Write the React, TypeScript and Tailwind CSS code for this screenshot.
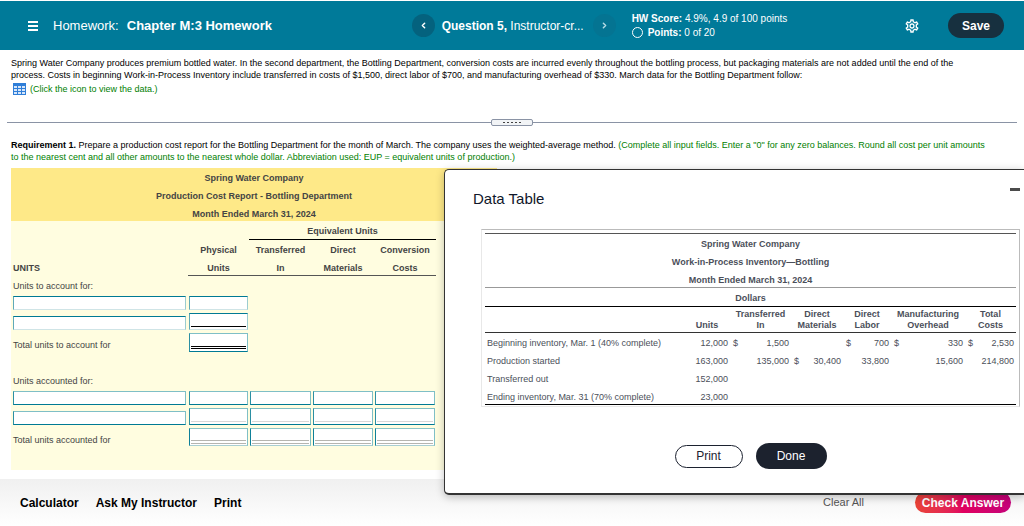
import React from 'react';
import { ChevronLeft, ChevronRight } from 'lucide-react';
import { MdOutlineSettings } from 'react-icons/md';

const inventoryRows = [
  {
    label: 'Beginning inventory, Mar. 1 (40% complete)',
    units: '12,000',
    costs: [['$', '1,500'], ['', ''], ['$', '700'], ['$', '330'], ['$', '2,530']],
  },
  {
    label: 'Production started',
    units: '163,000',
    costs: [['', '135,000'], ['$', '30,400'], ['', '33,800'], ['', '15,600'], ['', '214,800']],
  },
  {
    label: 'Transferred out',
    units: '152,000',
    costs: [['', ''], ['', ''], ['', ''], ['', ''], ['', '']],
  },
  {
    label: 'Ending inventory, Mar. 31 (70% complete)',
    units: '23,000',
    costs: [['', ''], ['', ''], ['', ''], ['', ''], ['', '']],
  },
];

const costHeadings = [
  ['Transferred', 'In'],
  ['Direct', 'Materials'],
  ['Direct', 'Labor'],
  ['Manufacturing', 'Overhead'],
  ['Total', 'Costs'],
];

const unitHeadings = [
  ['Physical', 'Units'],
  ['Transferred', 'In'],
  ['Direct', 'Materials'],
  ['Conversion', 'Costs'],
];

const boxTop = 'border border-t-[#007a94] border-l-[#5fa9b8] border-r-[#9cccd0] border-b-[#cfe4e6] bg-white';
const boxBottom = 'border border-t-[#7fbfc6] border-l-[#2b8fa3] border-r-[#7fbfc6] border-b-[#007a94] bg-white';
const boxSides = 'border border-t-[#8cc6c9] border-l-[#0e8099] border-r-[#7fbfc6] border-b-[#a9cfd2] bg-white';

function Header() {
  return (
    <header className="mt-px h-[49px] flex items-center bg-[#007a99] text-white pr-5">
      <div className="w-[41%] flex items-center pl-7 text-[13px]">
        <button aria-label="Menu" className="flex flex-col gap-[2px] mr-[15px]">
          <span className="block w-[10px] h-[2px] bg-white" />
          <span className="block w-[10px] h-[2px] bg-white" />
          <span className="block w-[10px] h-[2px] bg-white" />
        </button>
        <span className="mr-2">Homework:</span>
        <h1 className="font-bold">Chapter M:3 Homework</h1>
      </div>
      <nav className="flex items-center text-xs">
        <button aria-label="Previous question" className="w-[23px] h-[23px] rounded-full bg-[#04627e] flex items-center justify-center">
          <ChevronLeft className="w-[9px] h-[9px]" strokeWidth={4} />
        </button>
        <span className="w-[158px] pl-[7px] whitespace-nowrap">
          <b>Question 5,</b> Instructor-cr...
        </span>
        <button aria-label="Next question" className="w-[23px] h-[23px] rounded-full bg-[#047492] flex items-center justify-center">
          <ChevronRight className="w-[9px] h-[9px] text-[#b5dbe4]" strokeWidth={4} />
        </button>
      </nav>
      <div className="flex-1 pl-4 text-[10px] leading-[14px] whitespace-nowrap">
        <p><b>HW Score:</b> 4.9%, 4.9 of 100 points</p>
        <p className="flex items-center">
          <span className="w-[11px] h-[11px] rounded-full border border-white mr-[5px]" />
          <span><b>Points:</b> 0 of 20</span>
        </p>
      </div>
      <button aria-label="Settings" className="mr-7">
        <MdOutlineSettings className="w-4 h-4" />
      </button>
      <button className="w-[56px] h-[25px] rounded-full bg-[#17303f] text-xs font-bold">Save</button>
    </header>
  );
}

function Intro() {
  return (
    <section className="pt-[7px] pl-[11px] pr-9 text-[9px] leading-3 text-black">
      <p>
        Spring Water Company produces premium bottled water. In the second department, the Bottling Department,
        conversion costs are incurred evenly throughout the bottling process, but packaging materials are not added
        until the end of the process. Costs in beginning Work-in-Process Inventory include transferred in costs of
        $1,500, direct labor of $700, and manufacturing overhead of $330. March data for the Bottling Department follow:
      </p>
      <a href="#data-table" className="flex items-center gap-1 pl-[2px] h-4 text-[#008000]">
        <svg width="13" height="12" viewBox="0 0 13 12">
          <rect width="13" height="12" fill="#2f7ed8" />
          <path
            d="M1 3h3v2H1zM5 3h3v2H5zM9 3h3v2H9zM1 6h3v2H1zM5 6h3v2H5zM9 6h3v2H9zM1 9h3v2H1zM5 9h3v2H5zM9 9h3v2H9z"
            fill="#d6e6fa"
          />
        </svg>
        (Click the icon to view the data.)
      </a>
    </section>
  );
}

function Splitter() {
  return (
    <div className="mt-[22px] mx-[7px] flex items-center">
      <span className="flex-1 h-px bg-[#8a93a5]" />
      <button
        aria-label="Resize panels"
        className="w-[42px] h-[7px] rounded-[2px] border border-[#8a93a5] bg-[#f2f4f6] flex items-center justify-center gap-[2px]"
      >
        <span className="w-[2px] h-px bg-[#444]" />
        <span className="w-[2px] h-px bg-[#444]" />
        <span className="w-[2px] h-px bg-[#444]" />
        <span className="w-[2px] h-px bg-[#444]" />
        <span className="w-[2px] h-px bg-[#444]" />
      </button>
      <span className="flex-1 h-px bg-[#8a93a5]" />
    </div>
  );
}

function LabelBox({ name, box }: { name: string; box: string }) {
  return (
    <td className="p-0 pl-[2px] pb-[2px] align-bottom">
      <input aria-label={name} className={`block w-[173px] h-[14px] px-1 ${box}`} />
    </td>
  );
}

function UnitBox({ name, box, size, line }: { name: string; box: string; size: string; line: string }) {
  return (
    <td className="p-0 px-px pb-[2px] align-bottom">
      <div className={`px-px ${size} ${box}`}>
        <input aria-label={name} className={`block w-full ${line}`} />
      </div>
    </td>
  );
}

function ReportTable() {
  return (
    <table className="mt-[5px] ml-[11px] w-[486px] table-fixed border-separate border-spacing-0 bg-[#fffde0] text-[9px] leading-[11px] text-[#444]">
      <colgroup>
        <col className="w-[177px]" />
        <col className="w-[61px]" />
        <col className="w-[63px]" />
        <col className="w-[62px]" />
        <col className="w-[62px]" />
        <col />
      </colgroup>
      <thead>
        <tr className="h-[53px] bg-[#fee988]">
          <th colSpan={6} className="p-0">
            <div className="grid gap-1 pt-[3px] leading-[14px]">
              <p>Spring Water Company</p>
              <p>Production Cost Report - Bottling Department</p>
              <p>Month Ended March 31, 2024</p>
            </div>
          </th>
        </tr>
        <tr className="h-[19px]">
          <td colSpan={2} />
          <th colSpan={3} className="p-0 pt-[3px] border-b border-black">Equivalent Units</th>
          <td />
        </tr>
        <tr className="h-[36px]">
          <th className="p-0 pl-[2px] pb-[2px] text-left align-bottom">UNITS</th>
          {unitHeadings.map(([first, second]) => (
            <th key={first} className="p-0 border-b border-[#555]">
              <div className="grid gap-1 pt-[3px] leading-[14px]">
                <p>{first}</p>
                <p>{second}</p>
              </div>
            </th>
          ))}
          <td />
        </tr>
      </thead>
      <tbody>
        <tr className="h-[18px]">
          <td className="p-0 pt-[3px] pl-[2px]">Units to account for:</td>
          <td colSpan={5} />
        </tr>
        <tr className="h-[18px]">
          <LabelBox name="Units to account for, line 1" box={boxTop} />
          <UnitBox name="Physical units, line 1" box={boxTop} size="h-[14px]" line="h-3" />
          <td colSpan={4} />
        </tr>
        <tr className="h-[20px]">
          <LabelBox name="Units to account for, line 2" box={boxTop} />
          <UnitBox name="Physical units, line 2" box={boxTop} size="h-[17px]" line="h-[13px] border-b border-black" />
          <td colSpan={4} />
        </tr>
        <tr className="h-[22px]">
          <td className="p-0 pl-[2px] pt-[5px]">Total units to account for</td>
          <UnitBox name="Total physical units" box={boxBottom} size="h-[19px]" line="h-[15px] border-b-3 border-double border-black" />
          <td colSpan={4} />
        </tr>
        <tr className="h-[18px]">
          <td colSpan={6} />
        </tr>
        <tr className="h-[18px]">
          <td className="p-0 pl-[2px]">Units accounted for:</td>
          <td colSpan={5} />
        </tr>
        <tr className="h-[17px]">
          <LabelBox name="Units accounted for, line 1" box={boxBottom} />
          {unitHeadings.map(([first, second]) => (
            <UnitBox key={first} name={`${first} ${second}, accounted line 1`} box={boxBottom} size="h-[14px]" line="h-3" />
          ))}
          <td />
        </tr>
        <tr className="h-[20px]">
          <LabelBox name="Units accounted for, line 2" box={boxBottom} />
          {unitHeadings.map(([first, second]) => (
            <UnitBox key={first} name={`${first} ${second}, accounted line 2`} box={boxBottom} size="h-[17px]" line="h-[13px] border-b border-[#d8d8d8]" />
          ))}
          <td />
        </tr>
        <tr className="h-[21px]">
          <td className="p-0 pl-[2px] pt-[5px]">Total units accounted for</td>
          {unitHeadings.map(([first, second]) => (
            <UnitBox key={first} name={`${first} ${second}, total accounted`} box={boxSides} size="h-[18px]" line="h-[15px] border-b-4 border-double border-[#b5b5b0]" />
          ))}
          <td />
        </tr>
        <tr className="h-[22px]">
          <td colSpan={6} />
        </tr>
      </tbody>
    </table>
  );
}

function InventoryTable() {
  return (
    <div className="mr-1 border border-t-[#bbb] border-r-[#bbb] border-b-[#e8e8e8] border-l-[#e8e8e8] p-[3px] pb-px">
      <table className="w-full table-fixed border-collapse text-[9px] leading-[11px] text-[#4b4f5a]">
        <colgroup>
          <col />
          <col className="w-[46px]" />
          <col className="w-[10px]" />
          <col className="w-[51px]" />
          <col className="w-[10px]" />
          <col className="w-[42px]" />
          <col className="w-[10px]" />
          <col className="w-[38px]" />
          <col className="w-[10px]" />
          <col className="w-[64px]" />
          <col className="w-[10px]" />
          <col className="w-[41px]" />
        </colgroup>
        <thead>
          <tr>
            <th colSpan={12} className="p-0 border-t border-t-[#555] border-b border-b-[#999]">
              <div className="grid gap-1 pt-[3px] leading-[14px]">
                <p>Spring Water Company</p>
                <p>Work-in-Process Inventory—Bottling</p>
                <p>Month Ended March 31, 2024</p>
              </div>
            </th>
          </tr>
          <tr className="h-[19px]">
            <th colSpan={12} className="p-0 pt-[3px] border-b border-black">Dollars</th>
          </tr>
          <tr className="h-[26px] border-b border-[#333]">
            <th />
            <th className="p-0 align-bottom pb-px">Units</th>
            {costHeadings.map(([first, second]) => (
              <th key={first + second} colSpan={2} className="p-0 pb-px align-bottom whitespace-nowrap">
                {first}
                <br />
                {second}
              </th>
            ))}
          </tr>
        </thead>
        <tbody className="border-b border-black">
          {inventoryRows.map((row) => (
            <tr key={row.label} className="h-[18px]">
              <td className="p-0 pt-1 pl-[2px] whitespace-nowrap">{row.label}</td>
              <td className="p-0 pt-1 pr-[2px] text-right">{row.units}</td>
              {row.costs.map(([sign, value], i) => (
                <React.Fragment key={i}>
                  <td className="p-0 pt-1 pl-[3px]">{sign}</td>
                  <td className="p-0 pt-1 pr-[2px] text-right">{value}</td>
                </React.Fragment>
              ))}
            </tr>
          ))}
        </tbody>
      </table>
    </div>
  );
}

function DataDialog() {
  return (
    <section
      id="data-table"
      role="dialog"
      aria-labelledby="dialog-title"
      className="absolute left-[444px] top-[169px] right-0 h-[326px] rounded-l-[5px] border border-r-0 border-b-2 border-[#333] bg-white pl-9 shadow-[0_2px_8px_rgba(0,0,0,0.25)]"
    >
      <div className="h-[59px] pr-1 flex items-center justify-between">
        <h2 id="dialog-title" className="-ml-2 text-[15px] text-[#0f172a]">Data Table</h2>
        <button aria-label="Minimize" className="pb-5 flex items-center">
          <span className="block w-[10px] h-[3px] bg-[#4b4b4b]" />
        </button>
      </div>
      <InventoryTable />
      <div className="mt-9 pr-1 flex items-center justify-center gap-[13px] text-xs">
        <button className="w-[68px] h-[23px] rounded-full border border-[#1c2230] text-[#1c2230]">Print</button>
        <button className="w-[71px] h-[26px] rounded-full bg-[#1c222e] text-white">Done</button>
      </div>
    </section>
  );
}

function Footer() {
  return (
    <footer className="mt-[9px] h-[47px] flex items-center gap-[17px] bg-gradient-to-b from-[#f0f0f0] to-white pl-[20px] pr-[13px] text-xs text-black">
      <button className="font-bold">Calculator</button>
      <button className="font-bold">Ask My Instructor</button>
      <button className="font-bold">Print</button>
      <button className="ml-auto mr-[34px] text-[11px] text-[#555]">Clear All</button>
      <button className="w-[96px] h-[21px] rounded-full bg-gradient-to-r from-[#ea4335] via-[#e0005f] to-[#c4007a] font-bold text-white">
        Check Answer
      </button>
    </footer>
  );
}

export default function App() {
  return (
    <div className="relative overflow-hidden bg-white font-['Liberation_Sans',Arial,sans-serif]">
      <Header />
      <Intro />
      <Splitter />
      <p className="mt-[13px] pl-[11px] pr-9 text-[9px] leading-3 text-black">
        <b>Requirement 1.</b> Prepare a production cost report for the Bottling Department for the month of March. The
        company uses the weighted-average method.{' '}
        <span className="text-[#008000]">
          (Complete all input fields. Enter a "0" for any zero balances. Round all cost per unit amounts to the nearest
          cent and all other amounts to the nearest whole dollar. Abbreviation used: EUP = equivalent units of
          production.)
        </span>
      </p>
      <ReportTable />
      <Footer />
      <DataDialog />
    </div>
  );
}
